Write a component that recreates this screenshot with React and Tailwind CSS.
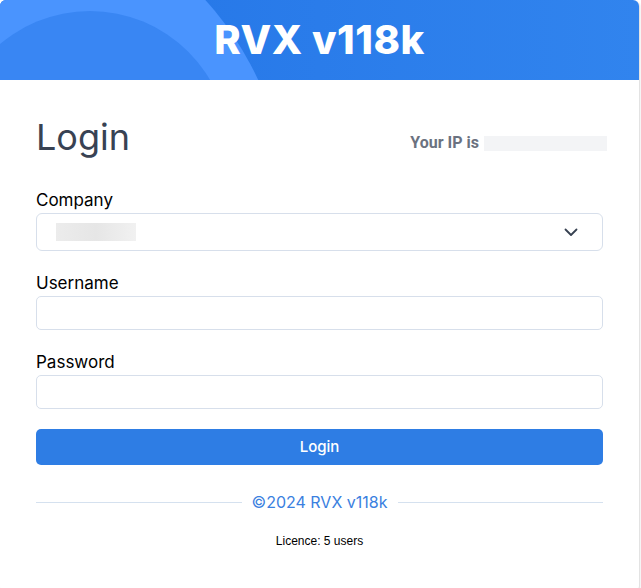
import React from "react";

// ── Header with decorative circles ───────────────────────────────────────────
const Header = () => (
  <div className="relative h-[80px] overflow-hidden rounded-t-[6px] bg-gradient-to-r from-[#2374e6] to-[#3184ee]">
    <svg className="absolute inset-0" width="639" height="80" viewBox="0 0 639 80">
      <circle cx="-33" cy="215" r="321" fill="#4a94fe" />
      <circle cx="90" cy="150" r="139" fill="#3986f3" />
    </svg>
    <div className="relative flex h-full items-center justify-center">
      <h1 className="font-['Inter',sans-serif] text-[40px] font-extrabold tracking-[0.5px] text-white">
        RVX v118k
      </h1>
    </div>
  </div>
);

// ── Form field ───────────────────────────────────────────────────────────────
const Field = ({ label, type = "text" }) => (
  <div className="flex flex-col gap-[3px]">
    <label className="text-[17px] leading-[20px] text-black">{label}</label>
    <input
      type={type}
      className="h-[34px] w-full rounded-[5px] border border-[#d7dfeb] bg-white px-3 outline-none"
    />
  </div>
);

export default function App() {
  return (
    <div className="min-h-screen bg-white font-['Inter',sans-serif]">
      <div className="flex w-[639px] flex-col rounded-[6px] bg-white shadow-[1px_1px_2px_rgba(0,0,0,0.15)]">
        <Header />

        <div className="flex flex-col px-[36px] pb-[44px] pt-[35px]">
          {/* Title row */}
          <div className="flex items-center justify-between">
            <h2 className="text-[36px] leading-[44px] text-[#384253]">Login</h2>
            <div className="mr-[-4px] mt-[12px] flex items-center gap-[5px]">
              <span className="font-['Roboto',sans-serif] text-[16px] font-bold text-[#6b7280]">
                Your IP is
              </span>
              <span className="h-[15px] w-[123px] bg-[#f3f4f6]" />
            </div>
          </div>

          {/* Company select */}
          <div className="mt-[31px] flex flex-col gap-[3px]">
            <label className="text-[17px] leading-[20px] text-black">Company</label>
            <div className="flex h-[38px] w-full items-center justify-between rounded-[6px] border border-[#d7dfeb] bg-white pl-[19px] pr-[24px]">
              <span className="h-[18px] w-[80px] bg-gradient-to-r from-[#ececec] via-[#e6e6e6] to-[#f1f1f1]" />
              <svg width="14" height="9" viewBox="0 0 14 9" fill="none">
                <path d="M1.5 1.5L7 7L12.5 1.5" stroke="#374151" strokeWidth="1.8" strokeLinecap="round" strokeLinejoin="round" />
              </svg>
            </div>
          </div>

          <div className="mt-[22px] flex flex-col gap-[22px]">
            <Field label="Username" />
            <Field label="Password" type="password" />
          </div>

          <button className="mt-[20px] flex h-[36px] w-full items-center justify-center rounded-[5px] bg-[#2e7de4] text-[15px] font-medium text-white">
            Login
          </button>

          {/* Divider */}
          <div className="mt-[27px] flex items-center gap-[10px]">
            <div className="h-px flex-1 bg-[#d5e1ef]" />
            <span className="text-[16px] leading-[20px] text-[#3a80e0]">©2024 RVX v118k</span>
            <div className="h-px flex-1 bg-[#d5e1ef]" />
          </div>

          <p className="mt-[22px] text-center font-['Liberation_Sans',sans-serif] text-[12px] leading-[14px] text-black">
            Licence: 5 users
          </p>
        </div>
      </div>
    </div>
  );
}
